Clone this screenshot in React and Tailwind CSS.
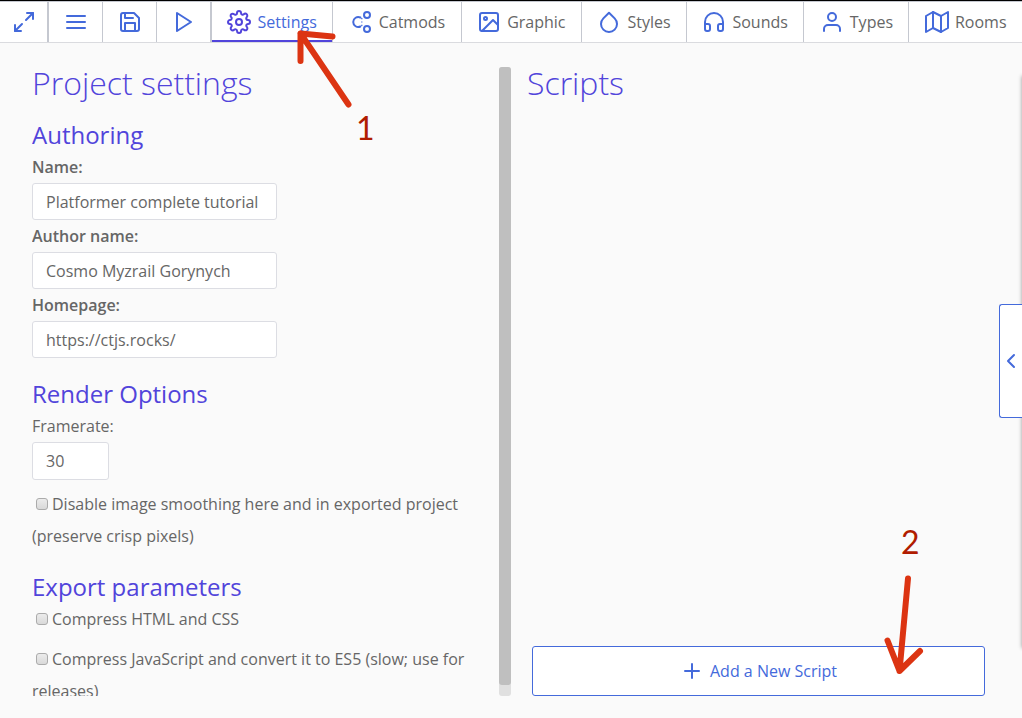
import { FiSettings, FiSave, FiImage, FiDroplet, FiHeadphones, FiUser, FiMap, FiMaximize2, FiMenu, FiPlay, FiPlus, FiChevronLeft } from "react-icons/fi";

function CatmodsIcon({ className }) {
  return (
    <svg viewBox="0 0 24 24" fill="none" stroke="currentColor" strokeWidth="2" strokeLinecap="round" strokeLinejoin="round" className={className} aria-hidden="true">
      <circle cx="18" cy="5" r="3" />
      <circle cx="18" cy="19" r="3" />
      <path d="M11.4 7.5A5 5 0 1 0 11.4 16.5" />
      <path d="M12.8 8v1.2M12.8 11.4v1.2M12.8 14.8v1.2" strokeWidth="1.3" strokeLinecap="butt" />
    </svg>
  );
}

const tools = [
  { label: "Toggle fullscreen", Icon: FiMaximize2, cell: "w-12 border-r" },
  { label: "Main menu", Icon: FiMenu, cell: "w-[55px] border-l border-r" },
  { label: "Save project", Icon: FiSave, cell: "w-[54px] border-r" },
  { label: "Run project", Icon: FiPlay, cell: "w-[54px] border-r" },
];

const tabs = [
  { label: "Settings", Icon: FiSettings, active: true },
  { label: "Catmods", Icon: CatmodsIcon },
  { label: "Graphic", Icon: FiImage },
  { label: "Styles", Icon: FiDroplet },
  { label: "Sounds", Icon: FiHeadphones },
  { label: "Types", Icon: FiUser },
  { label: "Rooms", Icon: FiMap },
];

const authoring = [
  { id: "name", label: "Name:", value: "Platformer complete tutorial" },
  { id: "author", label: "Author name:", value: "Cosmo Myzrail Gorynych" },
  { id: "homepage", label: "Homepage:", value: "https://ctjs.rocks/" },
];

const inputClass = "block rounded-[3px] border border-[#dcdde3] bg-white px-[13px] text-[#666] outline-none";

function TopBar() {
  return (
    <nav className="flex h-[42px] shrink-0 border-t border-b border-t-[#c5c8d0] border-b-[#dadbdf] bg-white">
      {tools.map(({ label, Icon, cell }) => (
        <button key={label} type="button" aria-label={label} className={`flex shrink-0 items-center justify-center border-[#c5c8d0] text-[#446adb] ${cell}`}>
          <Icon className="size-6" />
        </button>
      ))}
      <div className="flex min-w-0 grow border-l border-[#c5c8d0]">
        {tabs.map(({ label, Icon, active }) => (
          <button
            key={label}
            type="button"
            className={`flex flex-auto items-center justify-center gap-1.5 border-r border-[#c5c8d0] px-[15px] last:border-r-0 ${active ? "text-[#446adb] shadow-[inset_0_-2px_0_#5144db]" : ""}`}
          >
            <Icon className={active ? "size-6 shrink-0 text-[#5144db]" : "size-6 shrink-0 text-[#446adb]"} />
            {label}
          </button>
        ))}
      </div>
    </nav>
  );
}

function Heading({ children }) {
  return <h2 className="mb-1 text-2xl leading-6 text-[#5144db]">{children}</h2>;
}

function Check({ children }) {
  return (
    <label className="mb-2 block leading-8">
      <input type="checkbox" className="mx-1 size-3 appearance-none rounded-[3px] border border-[#ababab] bg-linear-to-b from-[#ececec] to-[#d9d9d9] align-baseline" />
      {children}
    </label>
  );
}

function SettingsPane() {
  return (
    <section className="flex min-h-0">
      <div className="min-h-0 grow overflow-y-auto [scrollbar-width:none]">
        <h1 className="mb-4 pb-2 text-[32px] leading-8 font-light text-[#5144db]">Project settings</h1>
        <Heading>Authoring</Heading>
        {authoring.map(({ id, label, value }) => (
          <div key={id}>
            <label htmlFor={id} className="block leading-8 font-semibold">{label}</label>
            <input id={id} type="text" defaultValue={value} className={`${inputClass} h-[37px] w-[245px]`} />
          </div>
        ))}
        <div className="mt-6">
          <Heading>Render Options</Heading>
          <label htmlFor="framerate" className="block leading-8">Framerate:</label>
          <input id="framerate" type="text" inputMode="numeric" defaultValue="30" className={`${inputClass} mb-2 h-[38px] w-[77px]`} />
          <Check>Disable image smoothing here and in exported project (preserve crisp pixels)</Check>
        </div>
        <div className="mt-[23px]">
          <Heading>Export parameters</Heading>
          <Check>Compress HTML and CSS</Check>
          <Check>Compress JavaScript and convert it to ES5 (slow; use for releases)</Check>
        </div>
      </div>
      <div className="w-3 shrink-0 rounded-[3px] bg-[#e0e0e0]">
        <div className="h-[calc(100%-11px)] rounded-[3px] bg-[#bfbfbf]" />
      </div>
    </section>
  );
}

function ScriptsPane() {
  return (
    <section className="flex flex-col pl-4">
      <h1 className="text-[32px] leading-8 font-light text-[#5144db]">Scripts</h1>
      <button type="button" className="mx-[5px] mt-auto flex h-[50px] items-center justify-center gap-1.5 rounded-[3px] border border-[#446adb] bg-white text-[#446adb]">
        <FiPlus className="size-6" />
        Add a New Script
      </button>
    </section>
  );
}

function Annotations() {
  return (
    <div className="pointer-events-none absolute inset-0 font-['Lato',sans-serif] text-[32px] leading-8 text-[#b01c00]">
      <svg className="absolute top-0 left-0 h-[718px] w-[1022px]" viewBox="0 0 1022 718" fill="none" stroke="#dc3412" strokeWidth="6" strokeLinecap="round" strokeLinejoin="round" aria-hidden="true">
        <path d="M348.500 104.500L300.500 33.500M300.500 61V33.500L332.500 36.500" />
        <path d="M908 578.500L899.500 671M887.500 640.500L899.500 671L920 651" />
      </svg>
      <span className="absolute top-[112px] left-[356px]">1</span>
      <span className="absolute top-[526px] left-[901px]">2</span>
    </div>
  );
}

export default function App() {
  return (
    <div className="relative flex h-screen flex-col overflow-hidden bg-[#fafafa] font-['Open_Sans',sans-serif] text-base text-[#666]">
      <div className="h-px shrink-0 bg-black" />
      <TopBar />
      <main className="grid min-h-0 grow grid-cols-2 grid-rows-1 px-8 pt-6 pb-[22px]">
        <SettingsPane />
        <ScriptsPane />
      </main>
      <aside className="absolute top-[76px] bottom-[70px] left-full w-64 bg-white shadow-[0_0_4px_rgba(0,0,0,0.4)]" />
      <button type="button" aria-label="Open side panel" className="absolute top-[304px] right-0 flex h-[114px] w-[23px] items-center justify-center rounded-l-[3px] border border-r-0 border-[#446adb] bg-white text-[#446adb]">
        <FiChevronLeft className="size-6 shrink-0" />
      </button>
      <Annotations />
    </div>
  );
}
